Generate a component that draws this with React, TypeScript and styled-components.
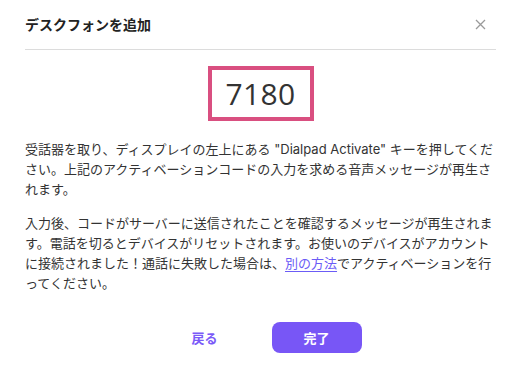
import React from 'react'
import styled, { createGlobalStyle } from 'styled-components'

const GlobalStyle = createGlobalStyle`
  html, body {
    margin: 0;
    padding: 0;
    background: #fff;
  }
  body {
    font-family: "Inter", "Noto Sans CJK JP", sans-serif;
    color: #333;
  }
`

const Dialog = styled.div`
  width: 521px;
  height: 380px;
  box-sizing: border-box;
  background: #fff;
`

const Header = styled.div`
  margin: 0 25px;
  height: 49px;
  border-bottom: 1px solid #dcdcdc;
  display: flex;
  align-items: center;
  justify-content: space-between;
`

const Title = styled.h2`
  margin: 0;
  font-size: 14px;
  font-weight: 700;
  color: #222;
  line-height: 20px;
`

const CloseButton = styled.button`
  width: 24px;
  height: 24px;
  margin-right: 4px;
  padding: 0;
  border: none;
  background: transparent;
  display: flex;
  align-items: center;
  justify-content: center;
  cursor: pointer;
`

const Body = styled.div`
  padding: 0 25px;
`

const CodeBox = styled.div`
  width: 106px;
  height: 55px;
  margin: 16px auto 0;
  box-sizing: border-box;
  border: 4px solid #d94f80;
  display: flex;
  align-items: center;
  justify-content: center;
  font-family: "Open Sans", sans-serif;
  font-size: 30px;
  color: #333;
  letter-spacing: 0.3px;
`

const Paragraph = styled.p<{ $first?: boolean }>`
  margin: ${p => (p.$first ? '18px' : '14px')} 0 0;
  font-size: 13px;
  line-height: 20px;
  color: #333;
  line-break: loose;
`

const Link = styled.a`
  color: #6b5cf6;
  text-decoration: underline;
  text-underline-offset: 3px;
`

const Actions = styled.div`
  margin-top: 29px;
  display: flex;
  justify-content: center;
  gap: 22px;
`

const ActionButton = styled.button<{ $primary?: boolean }>`
  width: 90px;
  height: 31px;
  border: none;
  border-radius: 8px;
  font-family: "Inter", "Noto Sans CJK JP", sans-serif;
  font-size: 13px;
  font-weight: 700;
  cursor: pointer;
  background: ${p => (p.$primary ? '#7856f6' : 'transparent')};
  color: ${p => (p.$primary ? '#fff' : '#7a5af8')};
`

const CloseIcon = () => (
  <svg width="11" height="11" viewBox="0 0 11 11">
    <path d="M1 1L10 10M10 1L1 10" stroke="#9a9a9a" strokeWidth="1.3" fill="none" />
  </svg>
)

const App = () => {
  return (
    <>
      <GlobalStyle />
      <Dialog>
        <Header>
          <Title>デスクフォンを追加</Title>
          <CloseButton aria-label="閉じる">
            <CloseIcon />
          </CloseButton>
        </Header>
        <Body>
          <CodeBox>7180</CodeBox>
          <Paragraph $first>
            受話器を取り、ディスプレイの左上にある "Dialpad Activate" キーを押してください。上記のアクティベーションコードの入力を求める音声メッセージが再生されます。
          </Paragraph>
          <Paragraph>
            入力後、コードがサーバーに送信されたことを確認するメッセージが再生されます。電話を切るとデバイスがリセットされます。お使いのデバイスがアカウントに接続されました！通話に失敗した場合は、<Link href="#">別の方法</Link>でアクティベーションを行ってください。
          </Paragraph>
          <Actions>
            <ActionButton>戻る</ActionButton>
            <ActionButton $primary>完了</ActionButton>
          </Actions>
        </Body>
      </Dialog>
    </>
  )
}

export default App
